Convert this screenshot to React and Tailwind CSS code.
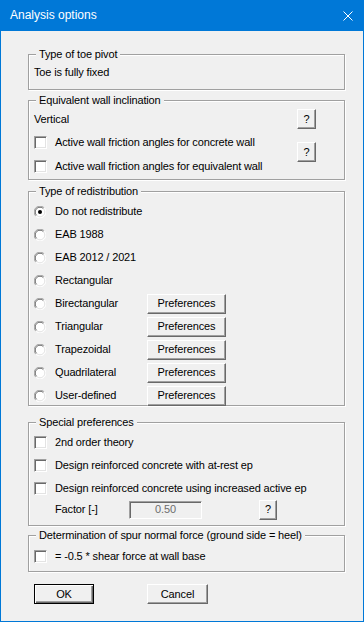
import React from "react";

function Group({ title, className, children }) {
  return (
    <div
      className={
        "relative border border-[#a0a0a0] shadow-[1px_1px_0_#fff,inset_1px_1px_0_#fff] " +
        className
      }
    >
      <span className="absolute -top-[7px] left-[7px] bg-[#f0f0f0] px-[3px] leading-[13px] whitespace-nowrap">
        {title}
      </span>
      {children}
    </div>
  );
}

function CheckBox() {
  return (
    <span className="block w-[13px] h-[13px] shrink-0 bg-white border border-t-[#a0a0a0] border-l-[#a0a0a0] border-r-white border-b-white shadow-[inset_1px_1px_0_#696969,inset_-1px_-1px_0_#e3e3e3]" />
  );
}

function Radio({ checked }) {
  return (
    <svg width="12" height="12" viewBox="0 0 12 12" className="shrink-0">
      <circle cx="6" cy="6" r="5.5" fill="#fff" />
      <path d="M1.8 10.2 A5.5 5.5 0 0 1 10.2 1.8" stroke="#a0a0a0" strokeWidth="1" fill="none" />
      <path d="M2.6 9.4 A4.5 4.5 0 0 1 9.4 2.6" stroke="#696969" strokeWidth="1" fill="none" />
      <path d="M10.2 1.8 A5.5 5.5 0 0 1 1.8 10.2" stroke="#fff" strokeWidth="1" fill="none" />
      <path d="M9.4 2.6 A4.5 4.5 0 0 1 2.6 9.4" stroke="#e3e3e3" strokeWidth="1" fill="none" />
      {checked && <circle cx="6" cy="6" r="2" fill="#000" />}
    </svg>
  );
}

function Btn({ children, className }) {
  return (
    <button
      className={
        "flex items-center justify-center bg-[#f0f0f0] border border-t-white border-l-white border-r-[#696969] border-b-[#696969] shadow-[inset_-1px_-1px_0_#a0a0a0] leading-none " +
        className
      }
    >
      {children}
    </button>
  );
}

function CheckRow({ label, className }) {
  return (
    <div className={"flex items-center pl-[5px] " + className}>
      <CheckBox />
      <span className="ml-[8px] whitespace-nowrap">{label}</span>
    </div>
  );
}

const radios = [
  { label: "Do not redistribute", checked: true },
  { label: "EAB 1988" },
  { label: "EAB 2012 / 2021" },
  { label: "Rectangular" },
  { label: "Birectangular", prefs: true },
  { label: "Triangular", prefs: true },
  { label: "Trapezoidal", prefs: true },
  { label: "Quadrilateral", prefs: true },
  { label: "User-defined", prefs: true },
];

export default function App() {
  return (
    <div className="w-[364px] h-[622px] bg-[#0078d7] px-[1px] pb-[1px] flex flex-col font-['Liberation_Sans',Arial,sans-serif] text-[11px] text-black">
      <div className="h-[31px] shrink-0 flex items-center justify-between pl-[9px] pr-[10px] text-white text-[12px]">
        <span className="pb-[1px]">Analysis options</span>
        <svg width="10" height="10" viewBox="0 0 10 10">
          <path d="M0.5 0.5 L9.5 9.5 M9.5 0.5 L0.5 9.5" stroke="#fff" strokeWidth="1" />
        </svg>
      </div>

      <div className="flex-1 bg-[#f0f0f0] pl-[27px] pt-[23px] flex flex-col tracking-[-0.14px]">
        <Group title="Type of toe pivot" className="w-[317px] h-[36px] pt-[9px]">
          <div className="h-[16px] flex items-center pl-[5px]">Toe is fully fixed</div>
        </Group>

        <Group title="Equivalent wall inclination" className="w-[317px] h-[80px] mt-[10px] pt-[7px]">
          <div className="h-[22px] flex items-center justify-between pl-[5px] pr-[28px]">
            <span>Vertical</span>
            <Btn className="w-[19px] h-[20px]">?</Btn>
          </div>
          <div className="flex justify-between pr-[28px]">
            <div className="flex flex-col">
              <CheckRow label="Active wall friction angles for concrete wall" className="h-[24px]" />
              <CheckRow label="Active wall friction angles for equivalent wall" className="h-[24px]" />
            </div>
            <Btn className="w-[19px] h-[20px] mt-[12px]">?</Btn>
          </div>
        </Group>

        <Group title="Type of redistribution" className="w-[317px] h-[215px] mt-[11px] pt-[8px]">
          {radios.map((r) => (
            <div key={r.label} className="h-[23px] flex items-center pl-[5px]">
              <Radio checked={r.checked} />
              <span className="ml-[9px] w-[92px] whitespace-nowrap">{r.label}</span>
              {r.prefs && <Btn className="w-[79px] h-[20px]">Preferences</Btn>}
            </div>
          ))}
        </Group>

        <Group title="Special preferences" className="w-[317px] h-[104px] mt-[16px] pt-[8px]">
          <CheckRow label="2nd order theory" className="h-[23px]" />
          <CheckRow label="Design reinforced concrete with at-rest ep" className="h-[23px]" />
          <CheckRow label="Design reinforced concrete using increased active ep" className="h-[23px]" />
          <div className="h-[19px] flex items-center pl-[26px]">
            <span className="w-[74px]">Factor [-]</span>
            <div className="w-[73px] h-[18px] flex items-center justify-center text-[#6d6d6d] bg-[#f0f0f0] border border-t-[#a0a0a0] border-l-[#a0a0a0] border-r-white border-b-white shadow-[inset_1px_1px_0_#696969]">
              0.50
            </div>
            <Btn className="w-[18px] h-[20px] ml-[57px]">?</Btn>
          </div>
        </Group>

        <Group
          title="Determination of spur normal force (ground side = heel)"
          className="w-[317px] h-[37px] mt-[9px] pt-[9px]"
        >
          <CheckRow label="= -0.5 * shear force at wall base" className="h-[22px]" />
        </Group>

        <div className="flex mt-[12px] pl-[6px]">
          <button className="w-[60px] h-[20px] flex items-center justify-center bg-[#f0f0f0] border border-black shadow-[inset_1px_1px_0_#fff,inset_-1px_-1px_0_#696969,inset_-2px_-2px_0_#a0a0a0] leading-none">
            OK
          </button>
          <Btn className="w-[61px] h-[20px] ml-[53px]">Cancel</Btn>
        </div>
      </div>
    </div>
  );
}
